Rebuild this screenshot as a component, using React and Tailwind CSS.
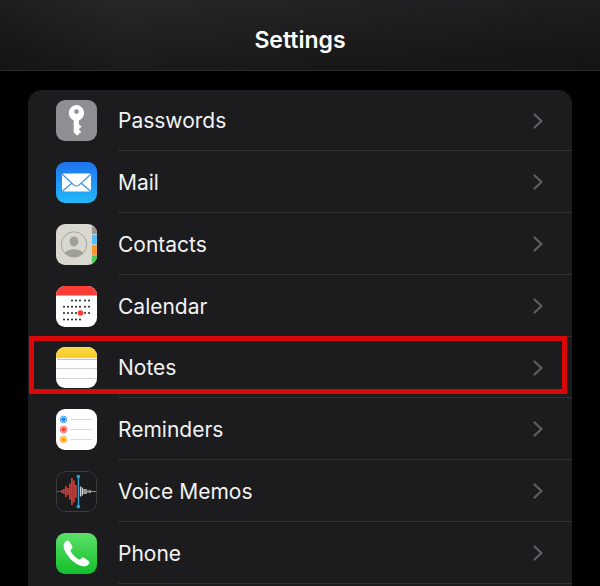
import { clsx } from "clsx";

const WAVE_RED = [
  [2, 1], [4, 1], [6, 3], [8, 5], [10, 11], [12, 7], [14, 16], [16, 27], [18, 22], [20, 13],
];
const WAVE_WHITE = [
  [24.5, 10], [26.3, 8], [28.1, 5], [30, 5], [32, 2], [34, 3], [36, 1], [38, 1], [40, 1],
];
const CALENDAR_DOTS = [
  [16, 20, 24, 29, 33],
  [8, 12, 16, 20, 24, 29, 33],
  [8, 12, 16, 20, 24, 29, 33],
  [8, 12, 16, 20, 24],
];

function IconTile({ id, children }) {
  return (
    <svg viewBox="0 0 41 41" className="h-[41px] w-[41px] shrink-0" aria-hidden="true">
      <defs>
        <clipPath id={`${id}-tile`}>
          <rect width="41" height="41" rx="9" />
        </clipPath>
      </defs>
      <g clipPath={`url(#${id}-tile)`}>{children}</g>
    </svg>
  );
}

function PasswordsIcon() {
  return (
    <IconTile id="passwords">
      <rect width="41" height="41" fill="#8e8e93" />
      <path
        fill="#fff"
        fillRule="evenodd"
        d="M20.5 5a8 8 0 0 0-2.800 15.400v12l3.500 3.300 4-3.900-2.500-2.600 2.800-2.400-2.600-2.500v-3.800A8 8 0 0 0 20.500 5Zm0 4.300a2.300 2.300 0 1 1 0 4.600 2.300 2.300 0 0 1 0-4.600Z"
      />
    </IconTile>
  );
}

function MailIcon() {
  return (
    <IconTile id="mail">
      <defs>
        <linearGradient id="mail-sky" x1="0" y1="0" x2="0" y2="1">
          <stop offset="0" stopColor="#2072ee" />
          <stop offset="1" stopColor="#22b9f8" />
        </linearGradient>
      </defs>
      <rect width="41" height="41" fill="url(#mail-sky)" />
      <rect x="6" y="11.5" width="29" height="18" rx="1.8" fill="#fff" />
      <path
        d="M6.5 12.5 17.7 22.8c1.7 1.5 3.9 1.5 5.6 0L34.5 12.5M6.5 29l9.6-8M34.5 29l-9.6-8"
        fill="none"
        stroke="#2c8fee"
        strokeWidth="1.1"
      />
    </IconTile>
  );
}

function ContactsIcon() {
  return (
    <IconTile id="contacts">
      <defs>
        <clipPath id="contacts-face">
          <circle cx="18" cy="20.5" r="12.5" />
        </clipPath>
      </defs>
      <rect width="41" height="41" fill="#d9d8cf" />
      <rect x="35.5" width="6" height="10.5" fill="#9a9a95" />
      <rect x="35.5" y="10.5" width="6" height="10" fill="#5dbbf5" />
      <rect x="35.5" y="21" width="6" height="10" fill="#f8952d" />
      <rect x="35.5" y="31" width="6" height="10" fill="#4fc954" />
      <path d="M35.5 0v41M36 10.5h5M36 21h5M36 31h5" stroke="#f0efe8" strokeWidth="0.5" />
      <g clipPath="url(#contacts-face)" fill="#a09f98">
        <ellipse cx="18" cy="17.5" rx="4.4" ry="5" />
        <ellipse cx="18" cy="31" rx="10" ry="5.7" />
      </g>
      <circle cx="18" cy="20.5" r="12.7" fill="none" stroke="#a09f98" strokeWidth="0.9" />
    </IconTile>
  );
}

function CalendarIcon() {
  return (
    <IconTile id="calendar">
      <rect width="41" height="41" fill="#fff" />
      <rect width="41" height="9.5" fill="#fc3d35" />
      {CALENDAR_DOTS.map((row, r) =>
        row.map((x) => (
          <circle key={`${r}-${x}`} cx={x} cy={14.5 + r * 6.3} r="1" fill="#222" />
        ))
      )}
      <circle cx="24.5" cy="27" r="2.8" fill="#fc3d35" />
    </IconTile>
  );
}

function NotesIcon() {
  return (
    <IconTile id="notes">
      <defs>
        <linearGradient id="notes-band" x1="0" y1="0" x2="0" y2="1">
          <stop offset="0" stopColor="#fbd84d" />
          <stop offset="1" stopColor="#f8ca22" />
        </linearGradient>
      </defs>
      <rect width="41" height="41" fill="#fff" />
      <rect width="41" height="10.5" fill="url(#notes-band)" />
      <path d="M0 10.8h41" stroke="#c9b98a" strokeWidth="0.6" />
      <path d="M1.5 12.5h39" stroke="#8c8c8c" strokeWidth="1" strokeDasharray="1 1" />
      <path d="M0 21.5h41M0 31.5h41" stroke="#c8c8c8" strokeWidth="0.8" />
    </IconTile>
  );
}

function RemindersIcon() {
  const items = [
    ["#2484e8", 10.5],
    ["#f0453c", 20.5],
    ["#f5a020", 30.5],
  ];
  return (
    <IconTile id="reminders">
      <rect width="41" height="41" fill="#fff" />
      {items.map(([color, y]) => (
        <g key={color}>
          <circle cx="7.5" cy={y} r="3.3" fill="none" stroke={color} strokeWidth="0.8" />
          <circle cx="7.5" cy={y} r="2.3" fill={color} />
          <path d={`M14.5 ${y}H36`} stroke="#cfcfd2" strokeWidth="0.8" />
        </g>
      ))}
    </IconTile>
  );
}

function VoiceMemosIcon() {
  return (
    <IconTile id="memos">
      <rect width="41" height="41" fill="#1b1b1d" />
      {WAVE_RED.map(([x, h]) => (
        <rect key={x} x={x - 1} y={20.5 - h / 2} width="1.8" height={h} fill="#c83a34" />
      ))}
      {WAVE_WHITE.map(([x, h]) => (
        <rect key={x} x={x - 0.6} y={20.5 - h / 2} width="1.3" height={h} fill="#d4d4d4" />
      ))}
      <path d="M22.4 6v29" stroke="#27a9d8" strokeWidth="1.2" />
      <circle cx="22.4" cy="5.5" r="1.8" fill="#27a9d8" />
      <circle cx="22.4" cy="35.5" r="1.8" fill="#27a9d8" />
      <rect x="0.5" y="0.5" width="40" height="40" rx="8.5" fill="none" stroke="#444446" strokeWidth="0.8" />
    </IconTile>
  );
}

function PhoneIcon() {
  return (
    <IconTile id="phone">
      <defs>
        <linearGradient id="phone-green" x1="0" y1="0" x2="0" y2="1">
          <stop offset="0" stopColor="#5de069" />
          <stop offset="1" stopColor="#12bf2a" />
        </linearGradient>
      </defs>
      <rect width="41" height="41" fill="url(#phone-green)" />
      <path
        fill="#fff"
        d="M9.2 8.8c1.4-1.6 3-1.8 4.1-.3l2.7 4.2c.8 1.3.5 2.4-.5 3.3-1.2 1-1.2 1.6-.4 2.9 1.7 2.7 4.2 5.2 7 7 1.3.8 1.9.8 2.9-.4.9-1 2-1.3 3.3-.5l4.2 2.8c1.5 1.1 1.3 2.600-.2 4-2.600 2.500-6.200 1.900-9.600.2-3.800-1.900-7.200-4.800-9.900-8.100-2.200-2.700-4-5.400-4.800-8.400-.7-2.700-.5-5 1.200-6.700Z"
      />
    </IconTile>
  );
}

const ITEMS = [
  { label: "Passwords", Icon: PasswordsIcon, compact: true },
  { label: "Mail", Icon: MailIcon },
  { label: "Contacts", Icon: ContactsIcon },
  { label: "Calendar", Icon: CalendarIcon },
  { label: "Notes", Icon: NotesIcon, compact: true, highlighted: true },
  { label: "Reminders", Icon: RemindersIcon },
  { label: "Voice Memos", Icon: VoiceMemosIcon },
  { label: "Phone", Icon: PhoneIcon },
];

function SettingsRow({ label, Icon, compact, highlighted }) {
  return (
    <li className="relative">
      <a
        href="#"
        className={clsx("flex items-center gap-[21px] pl-7", compact ? "h-[61px]" : "h-[62px]")}
      >
        <Icon />
        <span className="flex h-full flex-1 items-center justify-between border-b border-[#303032] pr-7 pt-px">
          <span className="pt-px text-[21px] leading-7 text-[#f2f2f3]">{label}</span>
          <svg viewBox="0 0 12 18" className="h-[18px] w-3" aria-hidden="true">
            <path
              d="M2.500 2.500 9.500 9l-7 6.500"
              fill="none"
              stroke="#5e5e62"
              strokeWidth="2.3"
              strokeLinecap="round"
              strokeLinejoin="round"
            />
          </svg>
        </span>
      </a>
      {highlighted && (
        <div className="pointer-events-none absolute -top-px right-[5px] bottom-1 left-px border-[5px] border-[#d90707]" />
      )}
    </li>
  );
}

export default function App() {
  return (
    <div className="flex min-h-screen flex-col bg-black font-['Inter',sans-serif]">
      <header className="border-b border-[#2b2b2b] bg-linear-to-b from-[#272729] to-[#1a1a1a]">
        <div className="flex h-[70px] items-center justify-center bg-linear-to-r from-black/25 via-transparent via-20% to-black/25 pt-2.5">
          <h1 className="text-[23px] leading-7 font-semibold text-white">Settings</h1>
        </div>
      </header>
      <main className="flex flex-1 flex-col px-7 pt-[19px]">
        <nav aria-label="Settings" className="flex-1 rounded-t-[14px] bg-[#1c1c1e]">
          <ul>
            {ITEMS.map((item) => (
              <SettingsRow key={item.label} {...item} />
            ))}
          </ul>
        </nav>
      </main>
    </div>
  );
}
